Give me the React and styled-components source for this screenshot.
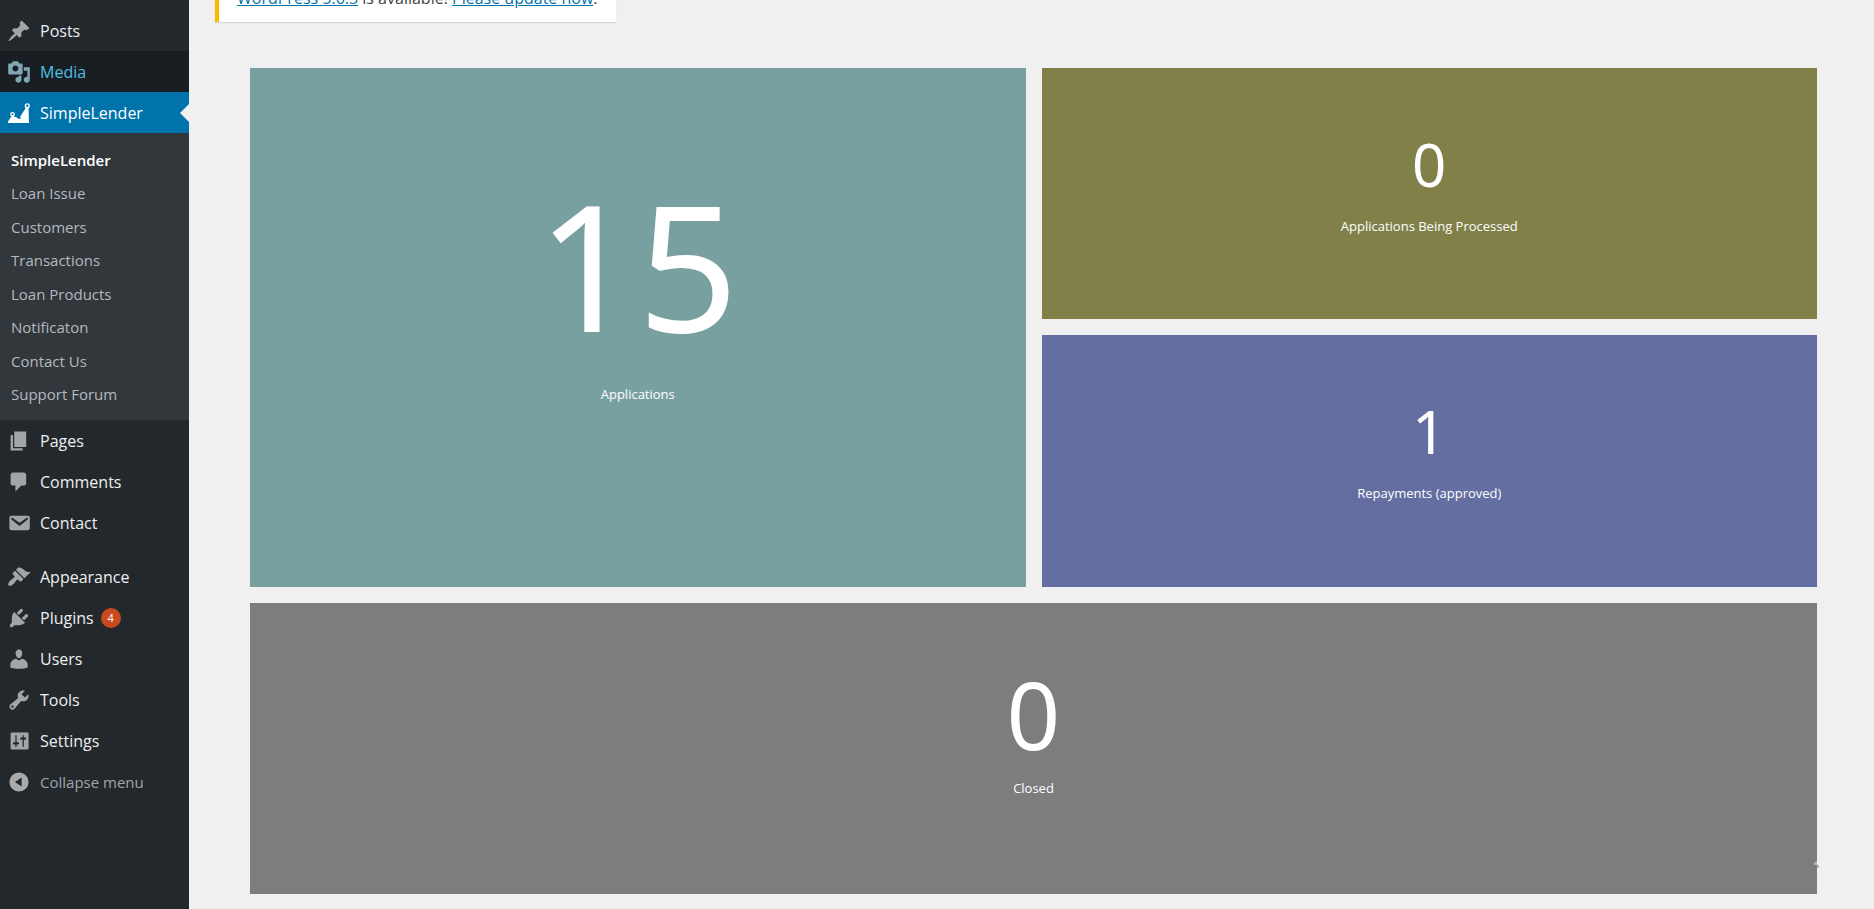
import React from "react";
import styled, { createGlobalStyle, css } from "styled-components";

const GlobalStyle = createGlobalStyle`
  * { box-sizing: border-box; }
  body {
    margin: 0;
    background: #f0f0f0;
    color: #444;
    font-family: "Open Sans", "Noto Sans", sans-serif;
    font-size: 16px;
    line-height: 20px;
  }
  ul { list-style: none; margin: 0; padding: 0; }
`;

const Page = styled.div`
  display: flex;
  height: 100vh;
  overflow: hidden;
`;

const Sidebar = styled.nav`
  flex: 0 0 189px;
  min-height: 100vh;
  padding-top: 10px;
  background: #23282d;
`;

const MenuList = styled.ul`
  display: flex;
  flex-direction: column;
`;

const MenuEntry = styled.li`
  margin-top: ${(p) => (p.$separated ? "13px" : "0")};
`;

const rowStyle = css`
  position: relative;
  display: flex;
  align-items: center;
  gap: 9px;
  width: 100%;
  height: 41px;
  padding: 0 7px;
  border: 0;
  font: inherit;
  font-size: 16px;
  text-align: left;
  text-decoration: none;
  cursor: pointer;
`;

const tones = {
  normal: { bg: "transparent", text: "#eee", icon: "#a0a5aa" },
  hover: { bg: "#191e23", text: "#4fc0e4", icon: "#82a6b4" },
  current: { bg: "#0073aa", text: "#fff", icon: "#fff" },
};

const MenuLink = styled.a`
  ${rowStyle}
  background: ${(p) => tones[p.$tone].bg};
  color: ${(p) => tones[p.$tone].text};
  svg { color: ${(p) => tones[p.$tone].icon}; }
`;

const CurrentArrow = styled.span`
  position: absolute;
  top: 50%;
  right: 0;
  margin-top: -9px;
  border: 9px solid transparent;
  border-left-width: 0;
  border-right-color: #f0f0f0;
`;

const CollapseButton = styled.button`
  ${rowStyle}
  background: transparent;
  color: #a0a5aa;
  font-size: 15px;
  svg { color: #aaa; }
`;

const Icon = styled.svg`
  flex: none;
  width: 24px;
  height: 24px;
  fill: currentColor;
`;

const Badge = styled.span`
  width: 20px;
  margin-left: -2px;
  border-radius: 10px;
  background: #ca4a1f;
  color: #fff;
  font-size: 11px;
  text-align: center;
`;

const Submenu = styled.ul`
  display: grid;
  grid-auto-rows: 1fr;
  min-height: 287px;
  padding: 10px 0 9px;
  background: #32373c;
`;

const SubLink = styled.a`
  display: flex;
  align-items: center;
  height: 100%;
  padding: 0 11px;
  color: ${(p) => (p.$current ? "#fff" : "#b4b9be")};
  font-size: 15px;
  font-weight: ${(p) => (p.$current ? 600 : 400)};
  text-decoration: none;
`;

const Main = styled.main`
  flex: 1;
  min-width: 0;
  padding: 0 57px 15px 26px;
`;

/* The page is scrolled, so the notice runs off the top edge. */
const Notice = styled.p`
  width: fit-content;
  margin: -24px 0 46px;
  padding: 12px 18px 14px;
  border-left: 4px solid #ffb900;
  background: #fff;
  box-shadow: 0 1px 1px rgba(0, 0, 0, 0.1);
`;

const NoticeLink = styled.a`
  color: #0073aa;
  text-decoration: underline;
`;

const Board = styled.section`
  display: grid;
  grid-template-columns: 1fr 1fr;
  grid-template-rows: minmax(251px, auto) minmax(252px, auto) minmax(291px, auto);
  gap: 16px;
  margin-left: 35px;
`;

const tileSizes = {
  small: { pad: "56px", font: "60px", line: "80px" },
  wide: { pad: "59px", font: "94px", line: "104px" },
  large: { pad: "88px", font: "176px", line: "216px" },
};

const Tile = styled.article`
  display: flex;
  flex-direction: column;
  align-items: center;
  gap: 12px;
  grid-column: ${(p) => (p.$size === "wide" ? "span 2" : "auto")};
  grid-row: ${(p) => (p.$size === "large" ? "span 2" : "auto")};
  padding-top: ${(p) => tileSizes[p.$size].pad};
  background: ${(p) => p.$color};
  color: #fff;
  position: relative;
`;

const Count = styled.strong`
  font-family: "Noto Sans", sans-serif;
  font-weight: 400;
  font-size: ${(p) => tileSizes[p.$size].font};
  line-height: ${(p) => tileSizes[p.$size].line};
`;

const Caption = styled.span`
  font-size: 13px;
`;

const Speck = styled.svg`
  position: absolute;
  right: -2px;
  bottom: 25px;
  width: 5px;
  height: 8px;
`;

const paths = {
  pin: "M10.44 3.02l1.82-1.82 6.36 6.35-1.83 1.82c-1.05-.68-2.48-.57-3.41.36l-.75.75c-.92.93-1.04 2.35-.35 3.41l-1.83 1.82-2.41-2.41-2.8 2.79c-.42.42-3.38 2.71-3.8 2.29s1.86-3.39 2.28-3.81l2.79-2.79L4.1 9.36l1.83-1.82c1.05.69 2.48.57 3.4-.36l.75-.75c.93-.92 1.05-2.35.36-3.41z",
  media: "M13 11V4c0-.55-.45-1-1-1h-1.67L9 1H5L3.67 3H2c-.55 0-1 .45-1 1v7c0 .55.45 1 1 1h10c.55 0 1-.45 1-1zM7 4.5c1.38 0 2.5 1.12 2.5 2.5S8.38 9.5 7 9.5 4.5 8.38 4.5 7 5.62 4.5 7 4.5zM14 6h5v10.5c0 1.38-1.12 2.5-2.5 2.5S14 17.88 14 16.5s1.12-2.5 2.5-2.5c.17 0 .34.02.5.05V9h-3V6zm-4 8.05V13h2v3.5c0 1.38-1.12 2.5-2.5 2.5S7 17.88 7 16.5 8.12 14 9.5 14c.17 0 .34.02.5.05z",
  pages: "M6 15V2h10v13H6zm-1 1h8v2H3V5h2v11z",
  comment: "M5 2h9c1.1 0 2 .9 2 2v7c0 1.1-.9 2-2 2h-2l-5 5v-5H5c-1.1 0-2-.9-2-2V4c0-1.1.9-2 2-2z",
  mail: "M3.87 4h13.25C18.37 4 19 4.59 19 5.79v8.42c0 1.19-.63 1.79-1.88 1.79H3.87c-1.25 0-1.88-.6-1.88-1.79V5.79c0-1.2.63-1.79 1.88-1.79zm6.62 8.6l6.74-5.53c.24-.2.43-.66.13-1.07-.29-.41-.82-.42-1.17-.17l-5.7 3.86L4.8 5.83c-.35-.25-.88-.24-1.17.17-.3.41-.11.87.13 1.07z",
  brush: "M14.48 11.06L7.41 3.99l1.5-1.5c.5-.56 2.3-.47 3.51.32 1.21.8 1.43 1.28 2.91 2.1 1.18.64 2.45 1.26 4.45.85zm-.71.71L6.7 4.7 4.93 6.47c-.39.39-.39 1.02 0 1.41l1.06 1.06c.39.39.39 1.03 0 1.42-.6.6-1.43 1.11-2.21 1.69-.35.26-.7.53-1.01.84C1.43 14.23.4 16.08 1.4 17.07c.99 1 2.84-.03 4.18-1.36.31-.31.58-.66.85-1.02.57-.78 1.08-1.61 1.69-2.21.39-.39 1.02-.39 1.41 0l1.06 1.06c.39.39 1.02.39 1.41 0z",
  plug: "M13.11 4.36L9.87 7.6 8 5.73l3.24-3.24c.35-.34 1.05-.2 1.56.32.52.51.66 1.21.31 1.55zm-8 1.77l.91-1.12 9.01 9.01-1.19.84c-.71.71-2.63 1.16-3.82 1.16H6.14L4.9 17.26c-.59.59-1.54.59-2.12 0-.59-.58-.59-1.53 0-2.12l1.24-1.24v-3.88c0-1.13.4-3.19 1.09-3.89zm7.26 3.97l3.24-3.24c.34-.35 1.04-.21 1.55.31.52.51.66 1.21.31 1.55l-3.24 3.25z",
  user: "M10 9.25c-2.27 0-2.73-3.44-2.73-3.44C7 4.02 7.82 2 9.97 2c2.16 0 2.98 2.02 2.71 3.81 0 0-.41 3.44-2.68 3.44zm0 2L12.4 9.700c2.600.300 4.840 2.600 4.840 4.850v2.490s-3.650 1.130-7.240 1.130c-3.650 0-7.240-1.130-7.240-1.130v-2.490c0-2.250 2.240-4.550 4.790-4.850z",
  wrench: "M16.68 9.77c-1.34 1.34-3.3 1.67-4.95.99l-5.41 6.52c-.99.99-2.59.99-3.58 0s-.99-2.59 0-3.57l6.52-5.42c-.68-1.65-.35-3.61.99-4.95 1.28-1.28 3.12-1.62 4.72-1.06l-2.89 2.89 2.82 2.82 2.86-2.87c.53 1.58.18 3.39-1.08 4.65zM3.81 16.21c.4.39 1.04.39 1.43 0 .4-.4.4-1.04 0-1.43-.39-.4-1.03-.4-1.43 0-.39.39-.39 1.03 0 1.43z",
  sliders: "M18 16V4c0-.55-.45-1-1-1H4c-.55 0-1 .45-1 1v12c0 .55.45 1 1 1h13c.55 0 1-.45 1-1zM8 11h1c.55 0 1 .45 1 1s-.45 1-1 1H8v1.5c0 .28-.22.5-.5.5s-.5-.22-.5-.5V13H6c-.55 0-1-.45-1-1s.45-1 1-1h1V5.5c0-.28.22-.5.5-.5s.5.22.5.5V11zm5-2h-1c-.55 0-1-.45-1-1s.45-1 1-1h1V5.5c0-.28.22-.5.5-.5s.5.22.5.5V7h1c.55 0 1 .45 1 1s-.45 1-1 1h-1v5.5c0 .28-.22.5-.5.5s-.5-.22-.5-.5V9z",
  collapse: "M10 2a8 8 0 1 0 0 16 8 8 0 0 0 0-16zm2.2 4.2v7.6L6.6 10z",
};

function MenuIcon({ name }) {
  if (name === "chart") {
    return (
      <Icon viewBox="0 0 24 24" aria-hidden="true">
        <path d="M1 22V20.500L5 14.500L12 17.500L19 6.500L21.500 6L22 22z" />
        <g fill="#0073aa" stroke="currentColor" strokeWidth="1.400">
          <circle cx="5.500" cy="13.300" r="1.700" />
          <circle cx="12.300" cy="16.800" r="1.300" stroke="none" />
          <circle cx="20.300" cy="4.800" r="1.900" />
        </g>
      </Icon>
    );
  }
  return (
    <Icon viewBox="0 0 20 20" aria-hidden="true">
      <path fillRule="evenodd" d={paths[name]} />
    </Icon>
  );
}

const submenu = [
  "SimpleLender",
  "Loan Issue",
  "Customers",
  "Transactions",
  "Loan Products",
  "Notificaton",
  "Contact Us",
  "Support Forum",
];

const menu = [
  { label: "Posts", icon: "pin" },
  { label: "Media", icon: "media", tone: "hover" },
  { label: "SimpleLender", icon: "chart", tone: "current", children: submenu },
  { label: "Pages", icon: "pages" },
  { label: "Comments", icon: "comment" },
  { label: "Contact", icon: "mail" },
  { label: "Appearance", icon: "brush", separated: true },
  { label: "Plugins", icon: "plug", count: 4 },
  { label: "Users", icon: "user" },
  { label: "Tools", icon: "wrench" },
  { label: "Settings", icon: "sliders" },
];

const tiles = [
  { count: 15, label: "Applications", color: "#79a0a0", size: "large" },
  { count: 0, label: "Applications Being Processed", color: "#808048", size: "small" },
  { count: 1, label: "Repayments (approved)", color: "#646ea0", size: "small" },
  { count: 0, label: "Closed", color: "#7d7d7f", size: "wide" },
];

export default function App() {
  return (
    <Page>
      <GlobalStyle />
      <Sidebar aria-label="Main menu">
        <MenuList>
          {menu.map((item) => (
            <MenuEntry key={item.label} $separated={item.separated}>
              <MenuLink href="#" $tone={item.tone || "normal"}>
                <MenuIcon name={item.icon} />
                {item.label}
                {item.count && <Badge>{item.count}</Badge>}
                {item.children && <CurrentArrow />}
              </MenuLink>
              {item.children && (
                <Submenu>
                  {item.children.map((label, i) => (
                    <li key={label}>
                      <SubLink href="#" $current={i === 0}>{label}</SubLink>
                    </li>
                  ))}
                </Submenu>
              )}
            </MenuEntry>
          ))}
          <MenuEntry>
            <CollapseButton type="button">
              <MenuIcon name="collapse" />
              Collapse menu
            </CollapseButton>
          </MenuEntry>
        </MenuList>
      </Sidebar>
      <Main>
        <Notice>
          <NoticeLink href="#">WordPress 5.6.3</NoticeLink> is available!{" "}
          <NoticeLink href="#">Please update now</NoticeLink>.
        </Notice>
        <Board>
          {tiles.map((tile) => (
            <Tile key={tile.label} $size={tile.size} $color={tile.color}>
              <Count $size={tile.size}>{tile.count}</Count>
              <Caption>{tile.label}</Caption>
              {tile.size === "wide" && (
                <Speck viewBox="0 0 5 8" aria-hidden="true">
                  <path d="M1 1L3 0V3L5 5V7H3V4H0V2z" fill="#b4b4b4" />
                </Speck>
              )}
            </Tile>
          ))}
        </Board>
      </Main>
    </Page>
  );
}
